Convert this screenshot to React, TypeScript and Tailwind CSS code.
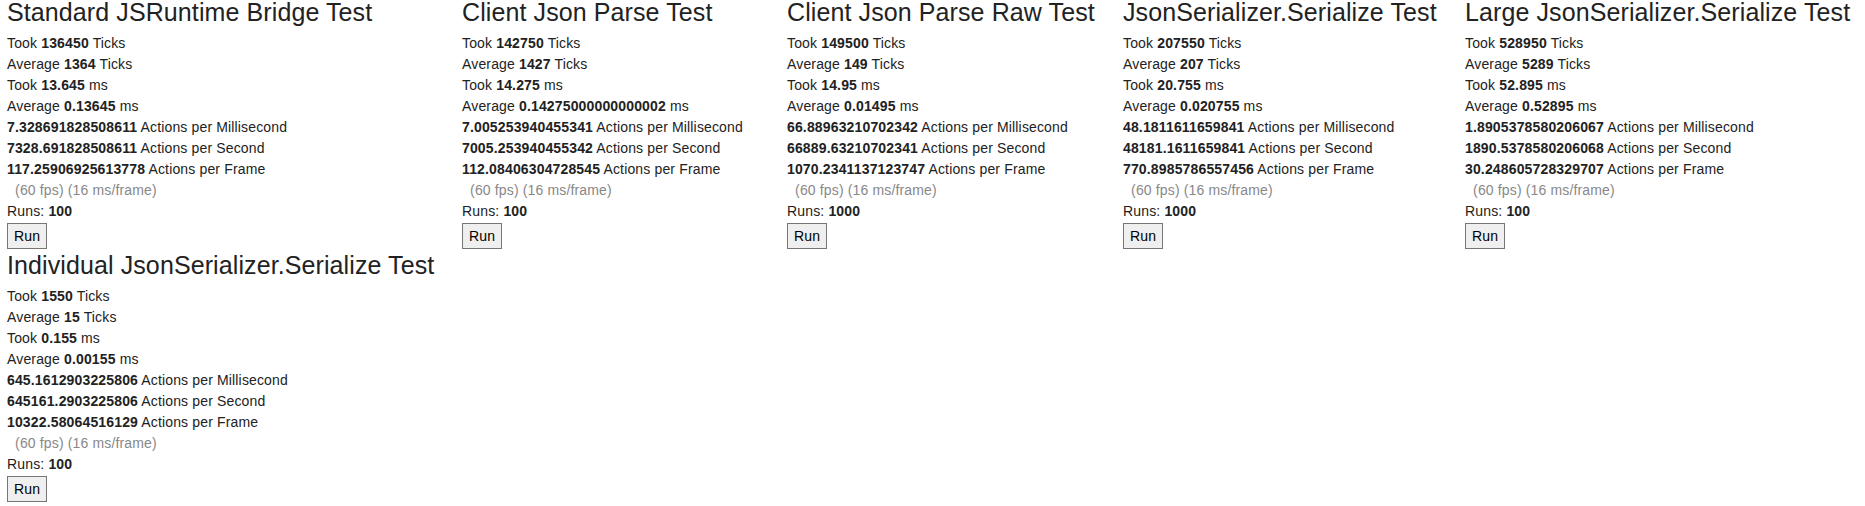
import React from "react";

type Test = {
  title: string;
  ticks: string;
  avgTicks: string;
  ms: string;
  avgMs: string;
  perMs: string;
  perSec: string;
  perFrame: string;
  runs: string;
  width: string;
};

const tests: Test[] = [
  {
    title: "Standard JSRuntime Bridge Test",
    ticks: "136450",
    avgTicks: "1364",
    ms: "13.645",
    avgMs: "0.13645",
    perMs: "7.328691828508611",
    perSec: "7328.691828508611",
    perFrame: "117.25906925613778",
    runs: "100",
    width: "w-[455px]",
  },
  {
    title: "Client Json Parse Test",
    ticks: "142750",
    avgTicks: "1427",
    ms: "14.275",
    avgMs: "0.14275000000000002",
    perMs: "7.005253940455341",
    perSec: "7005.253940455342",
    perFrame: "112.08406304728545",
    runs: "100",
    width: "w-[325px]",
  },
  {
    title: "Client Json Parse Raw Test",
    ticks: "149500",
    avgTicks: "149",
    ms: "14.95",
    avgMs: "0.01495",
    perMs: "66.88963210702342",
    perSec: "66889.63210702341",
    perFrame: "1070.2341137123747",
    runs: "1000",
    width: "w-[336px]",
  },
  {
    title: "JsonSerializer.Serialize Test",
    ticks: "207550",
    avgTicks: "207",
    ms: "20.755",
    avgMs: "0.020755",
    perMs: "48.1811611659841",
    perSec: "48181.1611659841",
    perFrame: "770.8985786557456",
    runs: "1000",
    width: "w-[342px]",
  },
  {
    title: "Large JsonSerializer.Serialize Test",
    ticks: "528950",
    avgTicks: "5289",
    ms: "52.895",
    avgMs: "0.52895",
    perMs: "1.8905378580206067",
    perSec: "1890.5378580206068",
    perFrame: "30.248605728329707",
    runs: "100",
    width: "w-[390px]",
  },
  {
    title: "Individual JsonSerializer.Serialize Test",
    ticks: "1550",
    avgTicks: "15",
    ms: "0.155",
    avgMs: "0.00155",
    perMs: "645.1612903225806",
    perSec: "645161.2903225806",
    perFrame: "10322.58064516129",
    runs: "100",
    width: "w-[455px]",
  },
];

function Line({ children }: { children: React.ReactNode }) {
  return <div className="h-[21px] leading-[21px] whitespace-nowrap">{children}</div>;
}

function TestBlock({ t }: { t: Test }) {
  return (
    <div className={`${t.width} flex flex-col items-start pb-[4px]`}>
      <h3 className="text-[25px] leading-[24px] tracking-[0.1px] font-normal whitespace-nowrap m-0">{t.title}</h3>
      <div className="mt-[9px] text-[14px] tracking-[0.15px]">
        <Line>
          Took <b className="font-bold">{t.ticks}</b> Ticks
        </Line>
        <Line>
          Average <b className="font-bold">{t.avgTicks}</b> Ticks
        </Line>
        <Line>
          Took <b className="font-bold">{t.ms}</b> ms
        </Line>
        <Line>
          Average <b className="font-bold">{t.avgMs}</b> ms
        </Line>
        <Line>
          <b className="font-bold">{t.perMs}</b> Actions per Millisecond
        </Line>
        <Line>
          <b className="font-bold">{t.perSec}</b> Actions per Second
        </Line>
        <Line>
          <b className="font-bold">{t.perFrame}</b> Actions per Frame
        </Line>
        <Line>
          <span className="text-[#888888]">{"\u00a0\u00a0"}(60 fps) (16 ms/frame)</span>
        </Line>
        <Line>
          Runs: <b className="font-bold">{t.runs}</b>
        </Line>
      </div>
      <button
        type="button"
        className="mt-[1px] h-[26px] px-[6px] border border-[#767676] bg-[#efefef] text-[14px] leading-[24px] tracking-[0.15px] text-black rounded-none"
      >
        Run
      </button>
    </div>
  );
}

export default function App() {
  return (
    <div className="w-[1865px] min-h-[506px] bg-white text-[#222222] font-['Liberation_Sans',Arial,sans-serif] pl-[7px] flex flex-wrap items-start content-start">
      {tests.map((t) => (
        <TestBlock key={t.title} t={t} />
      ))}
    </div>
  );
}
